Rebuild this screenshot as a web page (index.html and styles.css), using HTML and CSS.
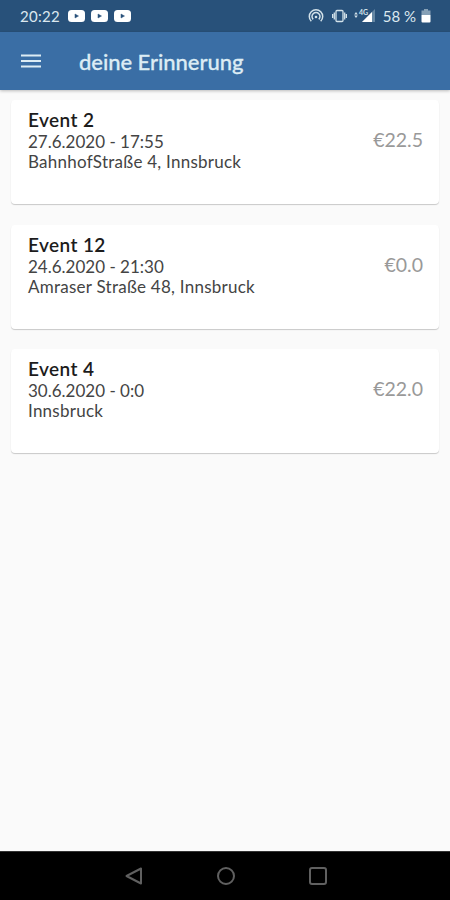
FILE: index.html
```
<!doctype html>
<html lang="de">
	<head>
		<meta charset="utf-8">
		<meta name="viewport" content="width=device-width, initial-scale=1">
		<title>deine Erinnerung</title>
		<link rel="stylesheet" href="styles.css">
	</head>
	<body>
		<div class="phone">
			<div class="status-bar">
				<span class="time">20:22</span>
				<svg class="video" width="17" height="12" viewBox="0 0 17 12"><rect width="17" height="12" rx="3.5" fill="#fff"/><path d="M7 4v4l3.500-2z" fill="#28517a" stroke="#28517a" stroke-width=".5"/></svg>
				<svg class="video" width="17" height="12" viewBox="0 0 17 12"><rect width="17" height="12" rx="3.5" fill="#fff"/><path d="M7 4v4l3.500-2z" fill="#28517a" stroke="#28517a" stroke-width=".5"/></svg>
				<svg class="video" width="17" height="12" viewBox="0 0 17 12"><rect width="17" height="12" rx="3.5" fill="#fff"/><path d="M7 4v4l3.500-2z" fill="#28517a" stroke="#28517a" stroke-width=".5"/></svg>
				<!-- hotspot, vibrate, signal -->
				<svg class="hotspot" width="16" height="14" viewBox="0 0 16 14" fill="none" stroke="#d3e2ea" stroke-width="1.5"><path d="M3.3 12.3a6.7 6.7 0 1 1 9.4 0M5.2 10.4a4 4 0 1 1 5.6 0"/><circle cx="8" cy="8" r="1.3" fill="#d3e2ea" stroke="none"/></svg>
				<svg class="vibrate" width="15" height="14" viewBox="0 0 15 14" fill="none" stroke="#d3e2ea" stroke-width="1.3"><rect x="4" y="1.5" width="7" height="11" rx="1"/><path d="M2.3 3.5v7M.6 5v4M12.7 3.5v7M14.4 5v4"/></svg>
				<svg class="signal" width="22" height="14" viewBox="0 0 22 14"><path d="M2 3l1.8 2.5H.2zM2 9L.2 6.5h3.6z" fill="#d3e2ea"/><path d="M21 0v13H8z" fill="#6486a3"/><path d="M18 3v10H8z" fill="#fff"/><text x="5" y="6" class="lte">4G</text></svg>
				<span class="percent">58 %</span>
				<svg class="battery" width="10" height="14" viewBox="0 0 10 14"><path d="M3 0h4v1.5h2.5V6h-9V1.500H3z" fill="#86a0b6"/><path d="M.5 6h9v6.500q0 1-1 1h-7q-1 0-1-1z" fill="#fff"/></svg>
			</div>
			<div class="toolbar">
				<svg class="menu" width="20" height="14" viewBox="0 0 20 14" stroke="#dcecf4" stroke-width="2.200"><path d="M0 1.500h20M0 7h20M0 12.500h20"/></svg>
				<h1>deine Erinnerung</h1>
			</div>
			<div class="events">
				<div class="card">
					<div class="info">
						<h2>Event 2</h2>
						<p class="date">27.6.2020 - 17:55</p>
						<p class="place">BahnhofStraße 4, Innsbruck</p>
					</div>
					<span class="price">€22.5</span>
				</div>
				<div class="card">
					<div class="info">
						<h2>Event 12</h2>
						<p class="date">24.6.2020 - 21:30</p>
						<p class="place">Amraser Straße 48, Innsbruck</p>
					</div>
					<span class="price">€0.0</span>
				</div>
				<div class="card">
					<div class="info">
						<h2>Event 4</h2>
						<p class="date">30.6.2020 - 0:0</p>
						<p class="place">Innsbruck</p>
					</div>
					<span class="price">€22.0</span>
				</div>
			</div>
			<div class="nav-bar">
				<svg width="20" height="20" viewBox="0 0 20 20"><path d="M17 2.500v15L2.500 10z"/></svg>
				<svg width="20" height="20" viewBox="0 0 20 20"><circle cx="10" cy="10" r="8"/></svg>
				<svg width="20" height="20" viewBox="0 0 20 20"><rect x="2" y="2" width="16" height="16" rx="2"/></svg>
			</div>
		</div>
	</body>
</html>
```
FILE: styles.css
```
body,
h1,
h2,
p {
	margin: 0;
	padding: 0;
}
.phone {
	display: flex;
	flex-direction: column;
	height: 900px;
	font-family: Lato, sans-serif;
	background: #fafafa;
}
/* status bar */
.status-bar {
	display: flex;
	align-items: center;
	box-sizing: border-box;
	height: 32px;
	padding: 0 19px 0 20px;
	color: #dce8ef;
	font-size: 15px;
	background: #28517a;
}
.time {
	width: 48px;
	letter-spacing: .3px;
}
.video {
	margin-right: 6px;
}
.hotspot {
	margin-left: auto;
}
.vibrate {
	margin-left: 8px;
}
.signal {
	margin-left: 7px;
}
.lte {
	font-size: 7px;
	font-weight: bold;
	fill: #d3e2ea;
}
.percent {
	margin: 0 5px 0 7px;
}
/* toolbar */
.toolbar {
	display: flex;
	z-index: 1;
	align-items: center;
	height: 58px;
	padding-left: 21px;
	background: #3a6ea5;
	box-shadow: 0 1px 3px rgba(0,0,0,.25);
}
.toolbar h1 {
	margin-left: 38px;
	color: #dcecf4;
	font-size: 22px;
	font-weight: 500;
	letter-spacing: -.05px;
	-webkit-text-stroke: .3px #dcecf4;
}
/* cards */
.events {
	display: flex;
	flex: 1;
	flex-direction: column;
	gap: 20.5px;
	padding: 10px 11px 0;
}
.card {
	display: flex;
	justify-content: space-between;
	box-sizing: border-box;
	height: 104px;
	padding: 8px 17px 0;
	border-radius: 4px;
	background: #fff;
	box-shadow: 0 1px 1px rgba(0,0,0,.2);
}
.card h2 {
	color: #1c1c1c;
	font-size: 19px;
	font-weight: 600;
	line-height: 24px;
	letter-spacing: .4px;
}
.card p {
	color: #444;
	font-size: 17px;
	line-height: 20px;
}
.card .place {
	letter-spacing: .25px;
}
.price {
	margin-top: 20px;
	margin-right: -1px;
	color: #999;
	font-size: 19.5px;
	line-height: 24px;
}
/* android buttons */
.nav-bar {
	display: flex;
	justify-content: center;
	align-items: center;
	gap: 72px;
	height: 48px;
	padding-left: 1px;
	border-top: 1px solid #333;
	background: #000;
}
.nav-bar svg {
	fill: none;
	stroke: #606060;
	stroke-width: 2;
	stroke-linejoin: round;
}
```
